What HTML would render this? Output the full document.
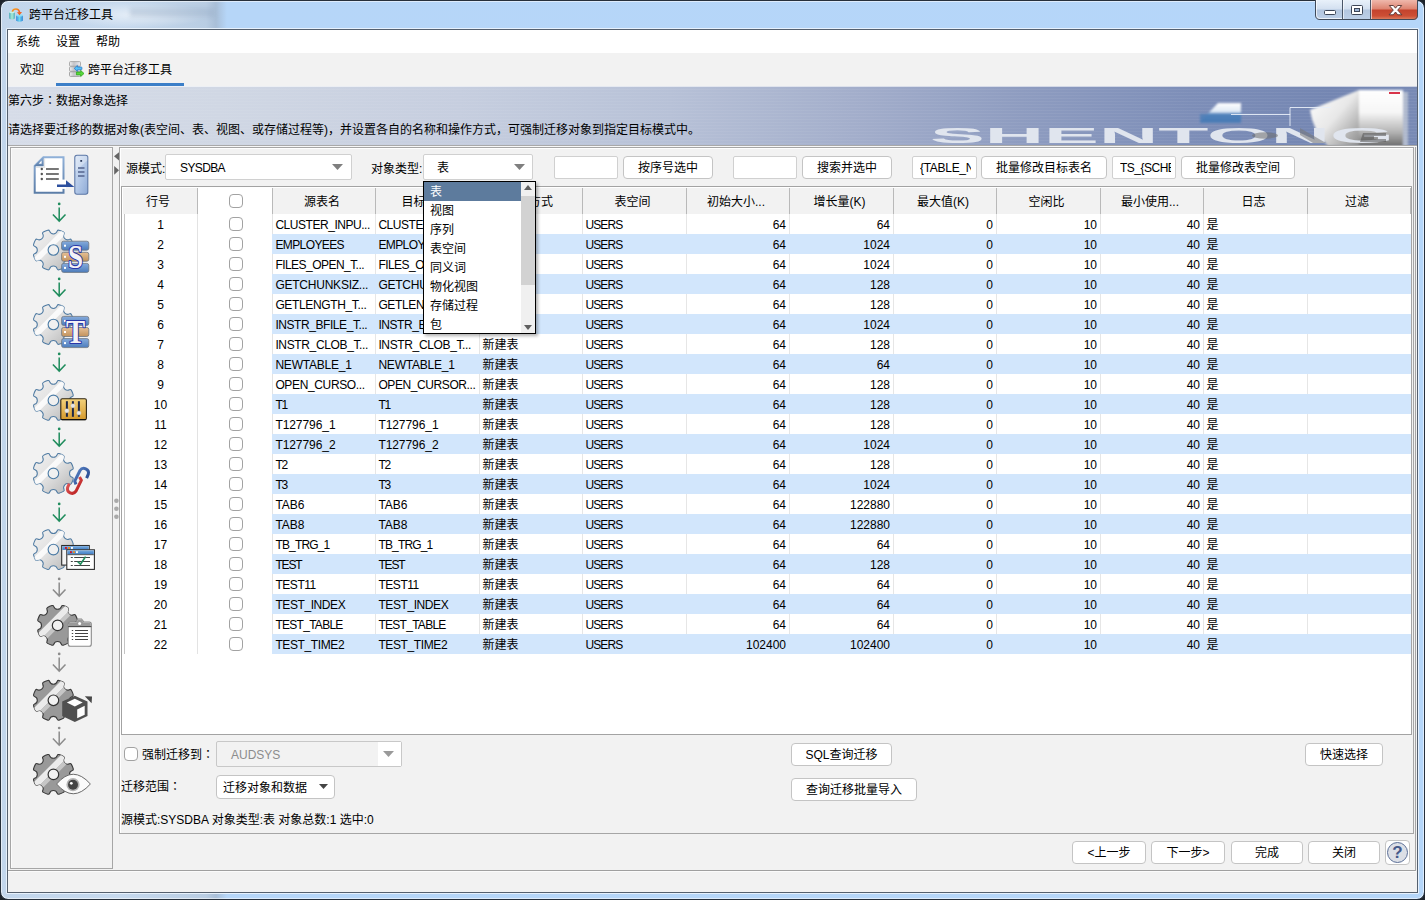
<!DOCTYPE html>
<html lang="zh-CN"><head><meta charset="utf-8"><title>跨平台迁移工具</title>
<style>
*{box-sizing:border-box;margin:0;padding:0}
html,body{width:1425px;height:900px;overflow:hidden}
body{position:relative;font-family:"Liberation Sans","Noto Sans CJK SC",sans-serif;font-size:12px;color:#000;background:#b9d3ee;line-height:16px}
.a{position:absolute}
.t{position:absolute;white-space:nowrap;height:16px;line-height:16px;margin-top:1px}
.l{letter-spacing:-0.45px}
.j{font-family:"Liberation Sans","Noto Sans CJK JP",sans-serif}
.btn{position:absolute;height:23px;border:1px solid #c4c4c4;border-radius:4px;background:#fff;text-align:center;line-height:21px;white-space:nowrap;padding-top:1px}
.inp{position:absolute;height:25px;border:1px solid #d0d0d0;background:#fff;border-radius:2px;line-height:23px;white-space:nowrap;overflow:hidden;padding-top:1px}
.cb{position:absolute;width:13.5px;height:13.5px;border:1px solid #a2a2a2;border-radius:4px;background:#fff}
.hd{position:absolute;top:188px;height:26px;line-height:26px;padding-top:1px;padding-right:4px;text-align:center;background:#f2f2f2;border-right:1px solid #b9b9b9;white-space:nowrap;overflow:hidden}
.row{position:absolute;left:124px;width:1287px;height:20px}
.row.b{background:linear-gradient(#d2e6fc,#d2e6fc) no-repeat 148px 0/1139px 20px}
.c{position:absolute;top:0;height:20px;line-height:20px;padding-top:1px;white-space:nowrap;overflow:hidden}
.r{text-align:right}
.g{position:absolute;top:0;width:1px;height:20px;background:#e6e6e6}
</style></head><body>
<div class="a" style="left:0;top:0;width:1425px;height:900px;background:#1d232b"></div>
<div class="a" id="glass" style="left:0;top:0;width:1425px;height:900px;border:1px solid #27303b;border-radius:8px;background:linear-gradient(90deg,#c2d6ec 0,#c6d9ee 120px,#b9cde3 205px,#a9bfd8 215px,#b6d6f8 226px,#b5d6f9 100%);box-shadow:inset 0 0 0 1px rgba(255,255,255,.55)"></div>
<div class="a" style="left:60px;top:2px;width:150px;height:26px;background:radial-gradient(ellipse at center,rgba(255,255,255,.55) 0,rgba(255,255,255,0) 70%)"></div>
<div class="a" style="left:130px;top:8px;width:85px;height:9px;background:rgba(150,170,195,.35);filter:blur(2px)"></div>
<div class="a" style="left:6px;top:28px;width:1413px;height:866px;border:1px solid rgba(235,244,253,.9);border-radius:1px"></div>
<div class="a" style="left:7px;top:29px;width:1411px;height:864px;border:1px solid #55606e;background:#f2f2f2"></div>
<svg class="a" style="left:1313px;top:0" width="107" height="22" viewBox="0 0 107 22">
<defs>
<linearGradient id="gb" x1="0" y1="0" x2="0" y2="1"><stop offset="0" stop-color="#e9f1fa"/><stop offset=".45" stop-color="#d3e0f0"/><stop offset=".5" stop-color="#b3c6df"/><stop offset="1" stop-color="#bdd0e8"/></linearGradient>
<linearGradient id="gr" x1="0" y1="0" x2="0" y2="1"><stop offset="0" stop-color="#efb8ac"/><stop offset=".45" stop-color="#dd8370"/><stop offset=".5" stop-color="#c4432d"/><stop offset=".8" stop-color="#cd4f35"/><stop offset="1" stop-color="#e08a6a"/></linearGradient>
<clipPath id="cp"><path d="M2 0H105V15Q105 20 100 20H7Q2 20 2 15Z"/></clipPath>
</defs>
<g clip-path="url(#cp)">
<rect x="2" y="0" width="28" height="20" fill="url(#gb)"/>
<rect x="30" y="0" width="27" height="20" fill="url(#gb)"/>
<rect x="57" y="0" width="48" height="20" fill="url(#gr)"/>
</g>
<path d="M2.5 0V15Q2.5 19.5 7 19.5H100Q104.5 19.5 104.5 15V0" fill="none" stroke="#3f4a5a" stroke-width="1"/>
<path d="M3.5 0V15Q3.5 18.5 7 18.5H29" fill="none" stroke="rgba(255,255,255,.7)" stroke-width="1"/>
<path d="M29.5 0V19M57.5 0V19" stroke="#4a5668" stroke-width="1"/>
<path d="M30.5 0V19M58.5 0V19" stroke="rgba(255,255,255,.6)" stroke-width="1"/>
<rect x="11.5" y="10.5" width="11" height="4" rx="1" fill="#fff" stroke="#3c4556" stroke-width="1"/>
<rect x="38.5" y="5.5" width="11" height="9" rx="1" fill="#fff" stroke="#3c4556" stroke-width="1"/>
<rect x="41.5" y="8.5" width="5" height="3" fill="#9db4d4" stroke="#3c4556" stroke-width="1"/>
<path d="M76.300 5.500h4.100l2.100 2.700 2.100-2.700h4.100l-4 4.600 4.200 4.700h-4.200l-2.200-2.800-2.200 2.800h-4.200l4.200-4.700z" fill="#fff" stroke="#53302e" stroke-width=".9" stroke-linejoin="round"/>
</svg>
<svg class="a" style="left:8px;top:7px" width="16" height="16" viewBox="0 0 16 16">
<defs>
<linearGradient id="c1" x1="0" y1="0" x2="1" y2="0"><stop offset="0" stop-color="#4fa9ba"/><stop offset=".5" stop-color="#a9ecd6"/><stop offset="1" stop-color="#55aebd"/></linearGradient>
<linearGradient id="c2" x1="0" y1="0" x2="1" y2="0"><stop offset="0" stop-color="#3a8fdc"/><stop offset=".5" stop-color="#6fd6f2"/><stop offset="1" stop-color="#2f83d6"/></linearGradient>
<linearGradient id="c3" x1="0" y1="0" x2="1" y2="1"><stop offset="0" stop-color="#f9a01e"/><stop offset="1" stop-color="#f15a24"/></linearGradient>
</defs>
<path d="M1.100 5.200Q4 3.800 6.900 5.200V11.600Q4 13.400 1.100 11.600Z" fill="url(#c1)"/>
<ellipse cx="4" cy="5.200" rx="2.900" ry="1" fill="#c6f3e6"/>
<path d="M8.100 8.400Q11.500 7 14.900 8.400V13.700Q11.500 15.600 8.100 13.700Z" fill="url(#c2)"/>
<ellipse cx="11.500" cy="8.400" rx="3.400" ry="1.100" fill="#8fdcf6"/>
<path d="M4.300 4.700C5 1.300 10.800 0.400 11.600 5.600" fill="none" stroke="url(#c3)" stroke-width="1.600"/>
<path d="M8.900 5.200L14 5L11.500 8.300Z" fill="#f2601f"/>
</svg>
<div class="t" style="left:29px;top:6px;font-size:12px">跨平台迁移工具</div>
<div class="a" style="left:8px;top:30px;width:1409px;height:23px;background:#fff"></div>
<div class="t" style="left:16px;top:33px">系统</div>
<div class="t" style="left:56px;top:33px">设置</div>
<div class="t" style="left:96px;top:33px">帮助</div>
<div class="a" style="left:8px;top:53px;width:1409px;height:33px;background:#f2f2f2"></div>
<div class="t" style="left:20px;top:61px">欢迎</div>
<div class="t" style="left:88px;top:61px">跨平台迁移工具</div>
<div class="a" style="left:56px;top:83px;width:128px;height:3px;background:#3c7fc8"></div>
<svg class="a" style="left:68px;top:61px" width="17" height="17" viewBox="0 0 17 17">
<defs><linearGradient id="rk" x1="0" y1="0" x2="1" y2="0"><stop offset="0" stop-color="#f0f0f0"/><stop offset=".4" stop-color="#c4c4c8"/><stop offset="1" stop-color="#ececf2"/></linearGradient></defs>
<rect x="1.500" y=".600" width="11" height="4.600" rx="1" fill="url(#rk)" stroke="#a4a4a4" stroke-width=".9"/>
<rect x="1.500" y="5.700" width="11" height="4.600" rx="1" fill="url(#rk)" stroke="#a4a4a4" stroke-width=".9"/>
<rect x="1.500" y="10.800" width="11" height="4.600" rx="1" fill="url(#rk)" stroke="#9c9c9c" stroke-width=".9"/>
<path d="M6.200 7.400L9.400 4.400V6H13.200Q13.900 6 13.900 6.700V8.100Q13.900 8.800 13.200 8.800H9.400V10.400Z" fill="#55c0f6" stroke="#2b78c8" stroke-width=".8" stroke-linejoin="round"/>
<path d="M16 12.500L12.700 9.500V11.100H8.400V13.900H12.700V15.500Z" fill="#58d83a" stroke="#2fa51e" stroke-width=".8" stroke-linejoin="round"/>
</svg>
<div class="a" id="banner" style="left:8px;top:86px;width:1409px;height:60px;background:linear-gradient(90deg,#d6dce8 0,#d0d7e4 15%,#c6cedf 32%,#b7c1d7 47%,#a3aecb 60%,#8e9cc0 72%,#7d8eb8 84%,#7486b2 94%,#788ab5 100%);overflow:hidden">
<div class="a" style="left:0;top:0;width:1409px;height:60px;background:repeating-linear-gradient(180deg,rgba(255,255,255,.05) 0,rgba(255,255,255,.05) 1px,rgba(0,0,0,0) 1px,rgba(0,0,0,0) 3px)"></div>
<div class="a" style="left:0;top:0;width:1409px;height:1px;background:rgba(255,255,255,.6)"></div>
<svg class="a" style="left:900px;top:0" width="509" height="60" viewBox="0 0 509 60">
<defs>
<linearGradient id="sv1" x1="0" y1="0" x2="0" y2="1"><stop offset="0" stop-color="#fff"/><stop offset=".4" stop-color="#f6f6f6"/><stop offset=".75" stop-color="#b4b4b4"/><stop offset="1" stop-color="#6e6e6e"/></linearGradient>
<linearGradient id="sv2" x1="0" y1="0" x2="1" y2="1"><stop offset="0" stop-color="#fff"/><stop offset=".5" stop-color="#e8e8e8"/><stop offset="1" stop-color="#8c8c8c"/></linearGradient>
<linearGradient id="sv3" x1="0" y1="0" x2="0" y2="1"><stop offset="0" stop-color="#fff"/><stop offset=".45" stop-color="#dfeaf5"/><stop offset=".55" stop-color="#6f9ccc"/><stop offset="1" stop-color="#3e6ea8"/></linearGradient>
<filter id="bl1"><feGaussianBlur stdDeviation="1.2"/></filter>
<filter id="bl2"><feGaussianBlur stdDeviation="0.7"/></filter>
</defs>
<g filter="url(#bl1)">
<path d="M402 24L451 4V60H420Q405 45 402 24Z" fill="url(#sv2)"/>
<rect x="451" y="4" width="44" height="56" fill="url(#sv1)"/>
<rect x="495" y="6" width="5" height="54" fill="#c9ced8" opacity=".7"/>
<path d="M292 36L310 17H333V36Z" fill="url(#sv3)"/>
<rect x="292" y="28" width="41" height="9" fill="#4a7db8" opacity=".8"/>
</g>
<path d="M323 28.500H382V21.500H423M382 28V40" fill="none" stroke="#e8eef8" stroke-width="1" opacity=".9"/>
<rect x="481" y="6" width="11" height="2" fill="#d8354a"/>
<g filter="url(#bl2)">
<text x="22" y="57" font-family="'Liberation Sans',sans-serif" font-weight="bold" font-size="22.500" fill="#e0e5ee" textLength="464" lengthAdjust="spacingAndGlyphs">SHENTONG</text>
</g>
<g filter="url(#bl2)" opacity=".55">
<ellipse cx="357" cy="49.500" rx="13" ry="3.200" fill="#6e6e6e"/>
<path d="M455 47H478V50H466V53H478V56H452Z" fill="#555"/>
<path d="M392 42L418 57H405L392 49Z" fill="#777"/>
</g>
</svg>
</div>
<div class="t" style="left:8px;top:92px">第六步<span class="j" lang="ja">：</span>数据对象选择</div>
<div class="t" style="left:8px;top:121px">请选择要迁移的数据对象(表空间、表、视图、或存储过程等)，并设置各自的名称和操作方式，可强制迁移对象到指定目标模式中。</div>
<div class="a" style="left:8px;top:145px;width:1409px;height:1px;background:#a9a9a9"></div>
<div class="a" style="left:8px;top:146px;width:1409px;height:1px;background:#f7f7f7"></div>
<div class="a" style="left:10px;top:147px;width:103px;height:722px;border:1px solid #a6a6a6;background:#f2f2f2;box-shadow:inset 1px 1px 0 #fbfbfb"></div>
<div class="a" style="left:119px;top:147px;width:1295px;height:687px;border:1px solid #a6a6a6;background:#f2f2f2;box-shadow:inset 1px 1px 0 #fff"></div>
<div class="a" style="left:8px;top:870px;width:1408px;height:1px;background:#a0a0a0"></div>
<div class="a" style="left:8px;top:871px;width:1408px;height:1px;background:#fbfbfb"></div>
<div class="a" style="left:1415px;top:147px;width:1px;height:724px;background:#a6a6a6"></div>
<svg class="a" style="left:113px;top:150px" width="7" height="372" viewBox="113 150 7 372">
<path d="M114 156.300L119 152.200V160.400Z" fill="#666"/><path d="M114.200 165.900L119 170.300L114.200 174.800Z" fill="#666"/>
<circle cx="116.400" cy="500.800" r="2.300" fill="#aaa"/><circle cx="116.400" cy="508.800" r="2.300" fill="#aaa"/><circle cx="116.400" cy="516.700" r="2.300" fill="#aaa"/>
</svg>
<svg class="a" style="left:11px;top:148px" width="101" height="720" viewBox="11 148 101 720">
<defs><linearGradient id="gg" x1="0" y1="0" x2="1" y2="1"><stop offset="0" stop-color="#f1f1f1"/><stop offset=".5" stop-color="#dfdfdf"/><stop offset="1" stop-color="#b4b4b4"/></linearGradient><clipPath id="gc"><path d="M19.82 -5.63A1.50 1.50 0 0 1 18.84 -3.80A4.00 4.00 0 0 0 18.84 3.80A1.50 1.50 0 0 1 19.82 5.63A20.60 20.60 0 0 1 17.99 10.03A1.50 1.50 0 0 1 16.01 10.64A4.00 4.00 0 0 0 10.64 16.01A1.50 1.50 0 0 1 10.03 17.99A20.60 20.60 0 0 1 5.63 19.82A1.50 1.50 0 0 1 3.80 18.84A4.00 4.00 0 0 0 -3.80 18.84A1.50 1.50 0 0 1 -5.63 19.82A20.60 20.60 0 0 1 -10.03 17.99A1.50 1.50 0 0 1 -10.64 16.01A4.00 4.00 0 0 0 -16.01 10.64A1.50 1.50 0 0 1 -17.99 10.03A20.60 20.60 0 0 1 -19.82 5.63A1.50 1.50 0 0 1 -18.84 3.80A4.00 4.00 0 0 0 -18.84 -3.80A1.50 1.50 0 0 1 -19.82 -5.63A20.60 20.60 0 0 1 -17.99 -10.03A1.50 1.50 0 0 1 -16.01 -10.64A4.00 4.00 0 0 0 -10.64 -16.01A1.50 1.50 0 0 1 -10.03 -17.99A20.60 20.60 0 0 1 -5.63 -19.82A1.50 1.50 0 0 1 -3.80 -18.84A4.00 4.00 0 0 0 3.80 -18.84A1.50 1.50 0 0 1 5.63 -19.82A20.60 20.60 0 0 1 10.03 -17.99A1.50 1.50 0 0 1 10.64 -16.01A4.00 4.00 0 0 0 16.01 -10.64A1.50 1.50 0 0 1 17.99 -10.03A20.60 20.60 0 0 1 19.82 -5.63Z"/></clipPath><linearGradient id="rb" x1="0" y1="0" x2="0" y2="1"><stop offset="0" stop-color="#86abdc"/><stop offset="1" stop-color="#4c7cbc"/></linearGradient><linearGradient id="rt" x1="0" y1="0" x2="0" y2="1"><stop offset="0" stop-color="#e6c096"/><stop offset="1" stop-color="#c2925c"/></linearGradient><linearGradient id="gold" x1="0" y1="0" x2="0" y2="1"><stop offset="0" stop-color="#f3d27c"/><stop offset="1" stop-color="#d69a2c"/></linearGradient><linearGradient id="tw" x1="0" y1="0" x2="1" y2="1"><stop offset="0" stop-color="#d4e1f3"/><stop offset=".5" stop-color="#b4c9e8"/><stop offset="1" stop-color="#8fabd6"/></linearGradient><linearGradient id="wt" x1="0" y1="0" x2="0" y2="1"><stop offset="0" stop-color="#78abdf"/><stop offset="1" stop-color="#3f7cc2"/></linearGradient><linearGradient id="lb" x1="0" y1="0" x2="1" y2="1"><stop offset="0" stop-color="#5b86c8"/><stop offset="1" stop-color="#1f3f86"/></linearGradient><linearGradient id="lr" x1="0" y1="0" x2="1" y2="1"><stop offset="0" stop-color="#e86a6a"/><stop offset="1" stop-color="#b41414"/></linearGradient><linearGradient id="dg" x1="0" y1="0" x2="0" y2="1"><stop offset="0" stop-color="#8fb0d8"/><stop offset="1" stop-color="#5c7ea8"/></linearGradient></defs>
<path d="M43.400 157.200H63.500V192.800H34.700V166Z" fill="#fff" stroke="url(#dg)" stroke-width="2" stroke-linejoin="miter"/><path d="M34.200 166.300H43.700V156.500Z" fill="url(#dg)"/><path d="M38.600 163.800H41.600V160.600Z" fill="#fff"/><path d="M36 167.500H44.500V158.500" stroke="#9a9a9a" stroke-width="1.200" fill="none" opacity=".25"/><circle cx="41.800" cy="169" r="1.200" fill="#555"/><path d="M46 169H58.800" stroke="#4a4a4a" stroke-width="1.500"/><circle cx="41.800" cy="174" r="1.200" fill="#555"/><path d="M46 174H58.800" stroke="#4a4a4a" stroke-width="1.500"/><circle cx="41.800" cy="179" r="1.200" fill="#555"/><path d="M46 179H58.800" stroke="#4a4a4a" stroke-width="1.500"/><rect x="60" y="179.600" width="6" height="9.300" fill="#fff"/><path d="M57 184.600H66V180.300L74.400 186.900H57Z" fill="#2c4f9e"/><rect x="74.800" y="155.300" width="13" height="39" rx="2.200" fill="url(#tw)" stroke="#5d78a6" stroke-width="1.100"/><path d="M75.500 171L87.300 160.500V156H76.500L75.500 157Z" fill="#fff" opacity=".3"/><rect x="80.300" y="160" width="1.800" height="1.800" fill="#2d3c5c"/><path d="M78 168H84.500" stroke="#5f7098" stroke-width="1.700"/><path d="M78 172H84.500" stroke="#5f7098" stroke-width="1.700"/><path d="M78 176H84.500" stroke="#5f7098" stroke-width="1.700"/>
<circle cx="59.2" cy="203.9" r="1.350" fill="#1f8c5c"/><path d="M59.2 207.5V220.9M52.900000000000006 214.5L59.2 221.1L65.5 214.5" fill="none" stroke="#1f8c5c" stroke-width="1.500" stroke-linecap="butt" stroke-linejoin="miter"/>
<circle cx="59.2" cy="278.9" r="1.350" fill="#1f8c5c"/><path d="M59.2 282.5V295.9M52.900000000000006 289.5L59.2 296.09999999999997L65.5 289.5" fill="none" stroke="#1f8c5c" stroke-width="1.500" stroke-linecap="butt" stroke-linejoin="miter"/>
<circle cx="59.2" cy="353.9" r="1.350" fill="#1f8c5c"/><path d="M59.2 357.5V370.9M52.900000000000006 364.5L59.2 371.09999999999997L65.5 364.5" fill="none" stroke="#1f8c5c" stroke-width="1.500" stroke-linecap="butt" stroke-linejoin="miter"/>
<circle cx="59.2" cy="428.9" r="1.350" fill="#1f8c5c"/><path d="M59.2 432.5V445.9M52.900000000000006 439.5L59.2 446.09999999999997L65.5 439.5" fill="none" stroke="#1f8c5c" stroke-width="1.500" stroke-linecap="butt" stroke-linejoin="miter"/>
<circle cx="59.2" cy="503.9" r="1.350" fill="#1f8c5c"/><path d="M59.2 507.5V520.9M52.900000000000006 514.5L59.2 521.1L65.5 514.5" fill="none" stroke="#1f8c5c" stroke-width="1.500" stroke-linecap="butt" stroke-linejoin="miter"/>
<circle cx="59.2" cy="578.9" r="1.350" fill="#8c8c8c"/><path d="M59.2 582.5V595.9M52.900000000000006 589.5L59.2 596.1L65.5 589.5" fill="none" stroke="#8c8c8c" stroke-width="1.500" stroke-linecap="butt" stroke-linejoin="miter"/>
<circle cx="59.2" cy="653.9" r="1.350" fill="#8c8c8c"/><path d="M59.2 657.5V670.9M52.900000000000006 664.5L59.2 671.1L65.5 664.5" fill="none" stroke="#8c8c8c" stroke-width="1.500" stroke-linecap="butt" stroke-linejoin="miter"/>
<circle cx="59.2" cy="728.0" r="1.350" fill="#8c8c8c"/><path d="M59.2 731.6V745.0M52.900000000000006 738.6L59.2 745.2L65.5 738.6" fill="none" stroke="#8c8c8c" stroke-width="1.500" stroke-linecap="butt" stroke-linejoin="miter"/>
<g transform="translate(53.4,250)"><path d="M19.82 -5.63A1.50 1.50 0 0 1 18.84 -3.80A4.00 4.00 0 0 0 18.84 3.80A1.50 1.50 0 0 1 19.82 5.63A20.60 20.60 0 0 1 17.99 10.03A1.50 1.50 0 0 1 16.01 10.64A4.00 4.00 0 0 0 10.64 16.01A1.50 1.50 0 0 1 10.03 17.99A20.60 20.60 0 0 1 5.63 19.82A1.50 1.50 0 0 1 3.80 18.84A4.00 4.00 0 0 0 -3.80 18.84A1.50 1.50 0 0 1 -5.63 19.82A20.60 20.60 0 0 1 -10.03 17.99A1.50 1.50 0 0 1 -10.64 16.01A4.00 4.00 0 0 0 -16.01 10.64A1.50 1.50 0 0 1 -17.99 10.03A20.60 20.60 0 0 1 -19.82 5.63A1.50 1.50 0 0 1 -18.84 3.80A4.00 4.00 0 0 0 -18.84 -3.80A1.50 1.50 0 0 1 -19.82 -5.63A20.60 20.60 0 0 1 -17.99 -10.03A1.50 1.50 0 0 1 -16.01 -10.64A4.00 4.00 0 0 0 -10.64 -16.01A1.50 1.50 0 0 1 -10.03 -17.99A20.60 20.60 0 0 1 -5.63 -19.82A1.50 1.50 0 0 1 -3.80 -18.84A4.00 4.00 0 0 0 3.80 -18.84A1.50 1.50 0 0 1 5.63 -19.82A20.60 20.60 0 0 1 10.03 -17.99A1.50 1.50 0 0 1 10.64 -16.01A4.00 4.00 0 0 0 16.01 -10.64A1.50 1.50 0 0 1 17.99 -10.03A20.60 20.60 0 0 1 19.82 -5.63Z" fill="url(#gg)" stroke="#517ca3" stroke-width="1.05" stroke-linejoin="round"/><g clip-path="url(#gc)"><path d="M-30 18.5L18.5 -30L22.500 -26L-26 22.500Z" fill="#fff" opacity=".8"/></g><circle r="5.300" fill="#f0f0f0" stroke="#4a7aa4" stroke-width="1.1"/></g>
<rect x="61.600" y="241.2" width="27.200" height="9" rx="2" fill="url(#rb)" stroke="#6e7680" stroke-width=".8"/><rect x="64" y="244.7" width="2" height="2" fill="#fff"/><rect x="61.600" y="252.3" width="27.200" height="9" rx="2" fill="url(#rt)" stroke="#6e7680" stroke-width=".8"/><rect x="64" y="255.8" width="2" height="2" fill="#fff"/><rect x="61.600" y="263.4" width="27.200" height="9" rx="2" fill="url(#rb)" stroke="#6e7680" stroke-width=".8"/><rect x="64" y="266.9" width="2" height="2" fill="#fff"/><text transform="translate(75.600,267.8) scale(0.82,1)" x="0" y="0" text-anchor="middle" font-family="'Liberation Serif',serif" font-weight="bold" font-size="33" fill="#f4f2f6" stroke="#2a36a8" stroke-width="2.200" stroke-linejoin="round" paint-order="stroke">S</text>
<g transform="translate(53.4,324.5)"><path d="M19.82 -5.63A1.50 1.50 0 0 1 18.84 -3.80A4.00 4.00 0 0 0 18.84 3.80A1.50 1.50 0 0 1 19.82 5.63A20.60 20.60 0 0 1 17.99 10.03A1.50 1.50 0 0 1 16.01 10.64A4.00 4.00 0 0 0 10.64 16.01A1.50 1.50 0 0 1 10.03 17.99A20.60 20.60 0 0 1 5.63 19.82A1.50 1.50 0 0 1 3.80 18.84A4.00 4.00 0 0 0 -3.80 18.84A1.50 1.50 0 0 1 -5.63 19.82A20.60 20.60 0 0 1 -10.03 17.99A1.50 1.50 0 0 1 -10.64 16.01A4.00 4.00 0 0 0 -16.01 10.64A1.50 1.50 0 0 1 -17.99 10.03A20.60 20.60 0 0 1 -19.82 5.63A1.50 1.50 0 0 1 -18.84 3.80A4.00 4.00 0 0 0 -18.84 -3.80A1.50 1.50 0 0 1 -19.82 -5.63A20.60 20.60 0 0 1 -17.99 -10.03A1.50 1.50 0 0 1 -16.01 -10.64A4.00 4.00 0 0 0 -10.64 -16.01A1.50 1.50 0 0 1 -10.03 -17.99A20.60 20.60 0 0 1 -5.63 -19.82A1.50 1.50 0 0 1 -3.80 -18.84A4.00 4.00 0 0 0 3.80 -18.84A1.50 1.50 0 0 1 5.63 -19.82A20.60 20.60 0 0 1 10.03 -17.99A1.50 1.50 0 0 1 10.64 -16.01A4.00 4.00 0 0 0 16.01 -10.64A1.50 1.50 0 0 1 17.99 -10.03A20.60 20.60 0 0 1 19.82 -5.63Z" fill="url(#gg)" stroke="#517ca3" stroke-width="1.05" stroke-linejoin="round"/><g clip-path="url(#gc)"><path d="M-30 18.5L18.5 -30L22.500 -26L-26 22.500Z" fill="#fff" opacity=".8"/></g><circle r="5.300" fill="#f0f0f0" stroke="#4a7aa4" stroke-width="1.1"/></g>
<rect x="61.600" y="316.4" width="27.200" height="9" rx="2" fill="url(#rb)" stroke="#6e7680" stroke-width=".8"/><rect x="64" y="319.9" width="2" height="2" fill="#fff"/><rect x="61.600" y="327.5" width="27.200" height="9" rx="2" fill="url(#rt)" stroke="#6e7680" stroke-width=".8"/><rect x="64" y="331.0" width="2" height="2" fill="#fff"/><rect x="61.600" y="338.6" width="27.200" height="9" rx="2" fill="url(#rb)" stroke="#6e7680" stroke-width=".8"/><rect x="64" y="342.1" width="2" height="2" fill="#fff"/><text transform="translate(75.600,343.0) scale(0.87,1)" x="0" y="0" text-anchor="middle" font-family="'Liberation Serif',serif" font-weight="bold" font-size="33" fill="#f4f2f6" stroke="#2a36a8" stroke-width="2.200" stroke-linejoin="round" paint-order="stroke">T</text>
<g transform="translate(53.4,400.4)"><path d="M19.82 -5.63A1.50 1.50 0 0 1 18.84 -3.80A4.00 4.00 0 0 0 18.84 3.80A1.50 1.50 0 0 1 19.82 5.63A20.60 20.60 0 0 1 17.99 10.03A1.50 1.50 0 0 1 16.01 10.64A4.00 4.00 0 0 0 10.64 16.01A1.50 1.50 0 0 1 10.03 17.99A20.60 20.60 0 0 1 5.63 19.82A1.50 1.50 0 0 1 3.80 18.84A4.00 4.00 0 0 0 -3.80 18.84A1.50 1.50 0 0 1 -5.63 19.82A20.60 20.60 0 0 1 -10.03 17.99A1.50 1.50 0 0 1 -10.64 16.01A4.00 4.00 0 0 0 -16.01 10.64A1.50 1.50 0 0 1 -17.99 10.03A20.60 20.60 0 0 1 -19.82 5.63A1.50 1.50 0 0 1 -18.84 3.80A4.00 4.00 0 0 0 -18.84 -3.80A1.50 1.50 0 0 1 -19.82 -5.63A20.60 20.60 0 0 1 -17.99 -10.03A1.50 1.50 0 0 1 -16.01 -10.64A4.00 4.00 0 0 0 -10.64 -16.01A1.50 1.50 0 0 1 -10.03 -17.99A20.60 20.60 0 0 1 -5.63 -19.82A1.50 1.50 0 0 1 -3.80 -18.84A4.00 4.00 0 0 0 3.80 -18.84A1.50 1.50 0 0 1 5.63 -19.82A20.60 20.60 0 0 1 10.03 -17.99A1.50 1.50 0 0 1 10.64 -16.01A4.00 4.00 0 0 0 16.01 -10.64A1.50 1.50 0 0 1 17.99 -10.03A20.60 20.60 0 0 1 19.82 -5.63Z" fill="url(#gg)" stroke="#517ca3" stroke-width="1.05" stroke-linejoin="round"/><g clip-path="url(#gc)"><path d="M-30 18.5L18.5 -30L22.500 -26L-26 22.500Z" fill="#fff" opacity=".8"/></g><circle r="5.300" fill="#f0f0f0" stroke="#4a7aa4" stroke-width="1.1"/></g>
<rect x="60.800" y="398.700" width="25.600" height="21" rx="1.500" fill="url(#gold)" stroke="#2e2412" stroke-width="1.100"/><path d="M61.500 419.600H86" stroke="#111" stroke-width="1.200"/><path d="M66.9 401.200V416.800" stroke="#1c2748" stroke-width="2"/><circle cx="66.9" cy="410.8" r="2.100" fill="#e6e6e6" stroke="#c9c9c9" stroke-width=".4"/><path d="M72.9 401.200V416.800" stroke="#1c2748" stroke-width="2"/><circle cx="72.9" cy="405.8" r="2.100" fill="#e6e6e6" stroke="#c9c9c9" stroke-width=".4"/><path d="M78.9 401.200V416.800" stroke="#1c2748" stroke-width="2"/><circle cx="78.9" cy="413" r="2.100" fill="#e6e6e6" stroke="#c9c9c9" stroke-width=".4"/>
<g transform="translate(53.4,473.4)"><path d="M19.82 -5.63A1.50 1.50 0 0 1 18.84 -3.80A4.00 4.00 0 0 0 18.84 3.80A1.50 1.50 0 0 1 19.82 5.63A20.60 20.60 0 0 1 17.99 10.03A1.50 1.50 0 0 1 16.01 10.64A4.00 4.00 0 0 0 10.64 16.01A1.50 1.50 0 0 1 10.03 17.99A20.60 20.60 0 0 1 5.63 19.82A1.50 1.50 0 0 1 3.80 18.84A4.00 4.00 0 0 0 -3.80 18.84A1.50 1.50 0 0 1 -5.63 19.82A20.60 20.60 0 0 1 -10.03 17.99A1.50 1.50 0 0 1 -10.64 16.01A4.00 4.00 0 0 0 -16.01 10.64A1.50 1.50 0 0 1 -17.99 10.03A20.60 20.60 0 0 1 -19.82 5.63A1.50 1.50 0 0 1 -18.84 3.80A4.00 4.00 0 0 0 -18.84 -3.80A1.50 1.50 0 0 1 -19.82 -5.63A20.60 20.60 0 0 1 -17.99 -10.03A1.50 1.50 0 0 1 -16.01 -10.64A4.00 4.00 0 0 0 -10.64 -16.01A1.50 1.50 0 0 1 -10.03 -17.99A20.60 20.60 0 0 1 -5.63 -19.82A1.50 1.50 0 0 1 -3.80 -18.84A4.00 4.00 0 0 0 3.80 -18.84A1.50 1.50 0 0 1 5.63 -19.82A20.60 20.60 0 0 1 10.03 -17.99A1.50 1.50 0 0 1 10.64 -16.01A4.00 4.00 0 0 0 16.01 -10.64A1.50 1.50 0 0 1 17.99 -10.03A20.60 20.60 0 0 1 19.82 -5.63Z" fill="url(#gg)" stroke="#517ca3" stroke-width="1.05" stroke-linejoin="round"/><g clip-path="url(#gc)"><path d="M-30 18.5L18.5 -30L22.500 -26L-26 22.500Z" fill="#fff" opacity=".8"/></g><circle r="5.300" fill="#f0f0f0" stroke="#4a7aa4" stroke-width="1.1"/></g>
<path d="M76 484.300L74.700 481.200L80 470.500A4.600 4.600 0 0 1 88.300 474.200L86.600 478.200" fill="none" stroke="url(#lb)" stroke-width="3" stroke-linejoin="round"/><path d="M79.500 477L81.400 480.200L76 491.200A4.700 4.700 0 0 1 67.600 487.300L69.300 483.600" fill="none" stroke="url(#lr)" stroke-width="3" stroke-linejoin="round"/>
<g transform="translate(53.4,549.6)"><path d="M19.82 -5.63A1.50 1.50 0 0 1 18.84 -3.80A4.00 4.00 0 0 0 18.84 3.80A1.50 1.50 0 0 1 19.82 5.63A20.60 20.60 0 0 1 17.99 10.03A1.50 1.50 0 0 1 16.01 10.64A4.00 4.00 0 0 0 10.64 16.01A1.50 1.50 0 0 1 10.03 17.99A20.60 20.60 0 0 1 5.63 19.82A1.50 1.50 0 0 1 3.80 18.84A4.00 4.00 0 0 0 -3.80 18.84A1.50 1.50 0 0 1 -5.63 19.82A20.60 20.60 0 0 1 -10.03 17.99A1.50 1.50 0 0 1 -10.64 16.01A4.00 4.00 0 0 0 -16.01 10.64A1.50 1.50 0 0 1 -17.99 10.03A20.60 20.60 0 0 1 -19.82 5.63A1.50 1.50 0 0 1 -18.84 3.80A4.00 4.00 0 0 0 -18.84 -3.80A1.50 1.50 0 0 1 -19.82 -5.63A20.60 20.60 0 0 1 -17.99 -10.03A1.50 1.50 0 0 1 -16.01 -10.64A4.00 4.00 0 0 0 -10.64 -16.01A1.50 1.50 0 0 1 -10.03 -17.99A20.60 20.60 0 0 1 -5.63 -19.82A1.50 1.50 0 0 1 -3.80 -18.84A4.00 4.00 0 0 0 3.80 -18.84A1.50 1.50 0 0 1 5.63 -19.82A20.60 20.60 0 0 1 10.03 -17.99A1.50 1.50 0 0 1 10.64 -16.01A4.00 4.00 0 0 0 16.01 -10.64A1.50 1.50 0 0 1 17.99 -10.03A20.60 20.60 0 0 1 19.82 -5.63Z" fill="url(#gg)" stroke="#517ca3" stroke-width="1.05" stroke-linejoin="round"/><g clip-path="url(#gc)"><path d="M-30 18.5L18.5 -30L22.500 -26L-26 22.500Z" fill="#fff" opacity=".8"/></g><circle r="5.300" fill="#f0f0f0" stroke="#4a7aa4" stroke-width="1.1"/></g>
<rect x="61.700" y="545.500" width="27.600" height="19.600" fill="#f4f4f4" stroke="#2e2e2e" stroke-width="1.100"/><rect x="62.300" y="546.100" width="26.400" height="3.800" fill="url(#wt)"/><rect x="65" y="547" width="1.900" height="1.900" fill="#d0112b"/><rect x="68" y="547" width="1.900" height="1.900" fill="#f08a1c"/><rect x="71" y="547" width="1.900" height="1.900" fill="#fff"/><rect x="66.800" y="549.800" width="27.600" height="19.600" fill="#fff" stroke="#2e2e2e" stroke-width="1.100"/><rect x="67.400" y="550.400" width="26.400" height="4" fill="url(#wt)"/><path d="M67.400 554.700H93.800" stroke="#2e2e2e" stroke-width=".8"/><rect x="70" y="551.200" width="1.900" height="1.900" fill="#d0112b"/><rect x="73" y="551.200" width="1.900" height="1.900" fill="#f08a1c"/><rect x="76" y="551.200" width="1.900" height="1.900" fill="#fff"/><path d="M70.800 557.5H72.800M74.200 557.5H90" stroke="#444" stroke-width="1"/><path d="M70.800 561.5H72.800M74.200 561.5H90" stroke="#444" stroke-width="1"/><path d="M70.800 565.5H72.800M74.200 565.5H90" stroke="#444" stroke-width="1"/><path d="M77.600 561.500L80.500 564.300L85.600 556.600" fill="none" stroke="#1f8c5c" stroke-width="1.700"/>
<g transform="translate(57.6,625.4)"><path d="M19.82 -5.63A1.50 1.50 0 0 1 18.84 -3.80A4.00 4.00 0 0 0 18.84 3.80A1.50 1.50 0 0 1 19.82 5.63A20.60 20.60 0 0 1 17.99 10.03A1.50 1.50 0 0 1 16.01 10.64A4.00 4.00 0 0 0 10.64 16.01A1.50 1.50 0 0 1 10.03 17.99A20.60 20.60 0 0 1 5.63 19.82A1.50 1.50 0 0 1 3.80 18.84A4.00 4.00 0 0 0 -3.80 18.84A1.50 1.50 0 0 1 -5.63 19.82A20.60 20.60 0 0 1 -10.03 17.99A1.50 1.50 0 0 1 -10.64 16.01A4.00 4.00 0 0 0 -16.01 10.64A1.50 1.50 0 0 1 -17.99 10.03A20.60 20.60 0 0 1 -19.82 5.63A1.50 1.50 0 0 1 -18.84 3.80A4.00 4.00 0 0 0 -18.84 -3.80A1.50 1.50 0 0 1 -19.82 -5.63A20.60 20.60 0 0 1 -17.99 -10.03A1.50 1.50 0 0 1 -16.01 -10.64A4.00 4.00 0 0 0 -10.64 -16.01A1.50 1.50 0 0 1 -10.03 -17.99A20.60 20.60 0 0 1 -5.63 -19.82A1.50 1.50 0 0 1 -3.80 -18.84A4.00 4.00 0 0 0 3.80 -18.84A1.50 1.50 0 0 1 5.63 -19.82A20.60 20.60 0 0 1 10.03 -17.99A1.50 1.50 0 0 1 10.64 -16.01A4.00 4.00 0 0 0 16.01 -10.64A1.50 1.50 0 0 1 17.99 -10.03A20.60 20.60 0 0 1 19.82 -5.63Z" fill="#999" stroke="#3a3a3a" stroke-width="1.1" stroke-linejoin="round"/><g clip-path="url(#gc)"><path d="M-30 18.2L18.2 -30L22.700 -25.500L-25.500 22.700Z" fill="#ebebeb"/><path d="M-25.500 22.700L22.700 -25.500L25.500 -22.700L-22.700 25.500Z" fill="#c6c6c6"/></g><circle r="5.300" fill="#f2f2f2" stroke="#333" stroke-width="1.2"/></g>
<path d="M70.300 622H76L78 619H81.500L84 622H89.200Q91.300 622 91.300 624.200V644Q91.300 646.300 89.200 646.300H70.300Q68.200 646.300 68.200 644V624.200Q68.200 622 70.300 622Z" fill="#fff" stroke="#8a8a8a" stroke-width="1.100"/><path d="M68.700 626.300V624.200Q68.700 622.500 70.300 622.500H76.300L78.200 619.500H81.300L83.700 622.500H89.200Q90.800 622.500 90.800 624.200V626.300Z" fill="#9a9a9a"/><path d="M68.200 626.600H91.300" stroke="#444" stroke-width="1.100"/><circle cx="79.600" cy="623.400" r="1.500" fill="#fff"/><path d="M71.800 630.5H73.200M75 630.5H88" stroke="#444" stroke-width="1"/><path d="M71.800 633.5H73.200M75 633.5H88" stroke="#444" stroke-width="1"/><path d="M71.800 636.5H73.200M75 636.5H88" stroke="#444" stroke-width="1"/><path d="M71.800 639.5H73.200M75 639.5H88" stroke="#444" stroke-width="1"/>
<g transform="translate(53.4,700.3)"><path d="M19.82 -5.63A1.50 1.50 0 0 1 18.84 -3.80A4.00 4.00 0 0 0 18.84 3.80A1.50 1.50 0 0 1 19.82 5.63A20.60 20.60 0 0 1 17.99 10.03A1.50 1.50 0 0 1 16.01 10.64A4.00 4.00 0 0 0 10.64 16.01A1.50 1.50 0 0 1 10.03 17.99A20.60 20.60 0 0 1 5.63 19.82A1.50 1.50 0 0 1 3.80 18.84A4.00 4.00 0 0 0 -3.80 18.84A1.50 1.50 0 0 1 -5.63 19.82A20.60 20.60 0 0 1 -10.03 17.99A1.50 1.50 0 0 1 -10.64 16.01A4.00 4.00 0 0 0 -16.01 10.64A1.50 1.50 0 0 1 -17.99 10.03A20.60 20.60 0 0 1 -19.82 5.63A1.50 1.50 0 0 1 -18.84 3.80A4.00 4.00 0 0 0 -18.84 -3.80A1.50 1.50 0 0 1 -19.82 -5.63A20.60 20.60 0 0 1 -17.99 -10.03A1.50 1.50 0 0 1 -16.01 -10.64A4.00 4.00 0 0 0 -10.64 -16.01A1.50 1.50 0 0 1 -10.03 -17.99A20.60 20.60 0 0 1 -5.63 -19.82A1.50 1.50 0 0 1 -3.80 -18.84A4.00 4.00 0 0 0 3.80 -18.84A1.50 1.50 0 0 1 5.63 -19.82A20.60 20.60 0 0 1 10.03 -17.99A1.50 1.50 0 0 1 10.64 -16.01A4.00 4.00 0 0 0 16.01 -10.64A1.50 1.50 0 0 1 17.99 -10.03A20.60 20.60 0 0 1 19.82 -5.63Z" fill="#999" stroke="#3a3a3a" stroke-width="1.1" stroke-linejoin="round"/><g clip-path="url(#gc)"><path d="M-30 18.2L18.2 -30L22.700 -25.500L-25.500 22.700Z" fill="#ebebeb"/><path d="M-25.500 22.700L22.700 -25.500L25.500 -22.700L-22.700 25.500Z" fill="#c6c6c6"/></g><circle r="5.300" fill="#f2f2f2" stroke="#333" stroke-width="1.2"/></g>
<path d="M74.800 695.800L87.500 701.500V716L74.800 721.900L62.200 716V701.500Z" fill="#505050"/><path d="M74.800 698.700L82.700 702.400L74.800 706.600L66.800 702.400Z" fill="#fff"/><path d="M77.200 709.600L84.700 705.800V714.700L77.200 718.300Z" fill="#fff"/><path d="M84.800 696.300L92 696.600L91.600 703.300Z" fill="#484848"/>
<g transform="translate(53.4,774.4)"><path d="M19.82 -5.63A1.50 1.50 0 0 1 18.84 -3.80A4.00 4.00 0 0 0 18.84 3.80A1.50 1.50 0 0 1 19.82 5.63A20.60 20.60 0 0 1 17.99 10.03A1.50 1.50 0 0 1 16.01 10.64A4.00 4.00 0 0 0 10.64 16.01A1.50 1.50 0 0 1 10.03 17.99A20.60 20.60 0 0 1 5.63 19.82A1.50 1.50 0 0 1 3.80 18.84A4.00 4.00 0 0 0 -3.80 18.84A1.50 1.50 0 0 1 -5.63 19.82A20.60 20.60 0 0 1 -10.03 17.99A1.50 1.50 0 0 1 -10.64 16.01A4.00 4.00 0 0 0 -16.01 10.64A1.50 1.50 0 0 1 -17.99 10.03A20.60 20.60 0 0 1 -19.82 5.63A1.50 1.50 0 0 1 -18.84 3.80A4.00 4.00 0 0 0 -18.84 -3.80A1.50 1.50 0 0 1 -19.82 -5.63A20.60 20.60 0 0 1 -17.99 -10.03A1.50 1.50 0 0 1 -16.01 -10.64A4.00 4.00 0 0 0 -10.64 -16.01A1.50 1.50 0 0 1 -10.03 -17.99A20.60 20.60 0 0 1 -5.63 -19.82A1.50 1.50 0 0 1 -3.80 -18.84A4.00 4.00 0 0 0 3.80 -18.84A1.50 1.50 0 0 1 5.63 -19.82A20.60 20.60 0 0 1 10.03 -17.99A1.50 1.50 0 0 1 10.64 -16.01A4.00 4.00 0 0 0 16.01 -10.64A1.50 1.50 0 0 1 17.99 -10.03A20.60 20.60 0 0 1 19.82 -5.63Z" fill="#999" stroke="#3a3a3a" stroke-width="1.1" stroke-linejoin="round"/><g clip-path="url(#gc)"><path d="M-30 18.2L18.2 -30L22.700 -25.500L-25.500 22.700Z" fill="#ebebeb"/><path d="M-25.500 22.700L22.700 -25.500L25.500 -22.700L-22.700 25.500Z" fill="#c6c6c6"/></g><circle r="5.300" fill="#f2f2f2" stroke="#333" stroke-width="1.2"/></g>
<path d="M56.600 784Q73 764.500 90.400 784Q73 803.500 56.600 784Z" fill="#fbfbfb" stroke="#6a6a6a" stroke-width="1"/><circle cx="73" cy="784.700" r="6.600" fill="#b4b4b4"/><circle cx="73" cy="784.700" r="5" fill="#444"/><circle cx="71.300" cy="783.300" r="1.400" fill="#fff"/>
</svg>
<div class="t" style="left:126px;top:160px">源模式:</div>
<div class="inp" style="left:165px;top:154px;width:187px;height:26px;padding-left:14px;line-height:24px;letter-spacing:-0.62px">SYSDBA</div>
<svg class="a" style="left:332px;top:164px" width="11" height="6" viewBox="0 0 11 6"><path d="M0 0H11L5.5 6Z" fill="#7f7f7f"/></svg>
<div class="t" style="left:371px;top:160px">对象类型:</div>
<div class="inp" style="left:423px;top:154px;width:110px;height:26px;padding-left:13px;line-height:24px">表</div>
<svg class="a" style="left:514px;top:164px" width="11" height="6" viewBox="0 0 11 6"><path d="M0 0H11L5.5 6Z" fill="#7f7f7f"/></svg>
<div class="inp" style="left:554px;top:156px;width:64px;height:23px"></div>
<div class="btn" style="left:623px;top:156px;width:90px">按序号选中</div>
<div class="inp" style="left:733px;top:156px;width:64px;height:23px"></div>
<div class="btn" style="left:802px;top:156px;width:90px">搜索并选中</div>
<div class="inp" style="left:912px;top:156px;width:65px;height:23px;padding-left:7px;line-height:21px"><div style="overflow:hidden;width:51px;letter-spacing:-.3px">{TABLE_N</div></div>
<div class="btn" style="left:981px;top:156px;width:126px">批量修改目标表名</div>
<div class="inp" style="left:1112px;top:156px;width:64px;height:23px;padding-left:7px;line-height:21px"><div style="overflow:hidden;width:51px;letter-spacing:-.5px">TS_{SCHE</div></div>
<div class="btn" style="left:1181px;top:156px;width:114px">批量修改表空间</div>
<div class="a" style="left:121px;top:186px;width:1291px;height:549px;border:1px solid #a3a3a3;background:#fff"></div>
<div class="a" style="left:123px;top:188px;width:1288px;height:26px;background:#f2f2f2"></div>
<div class="a" style="left:124px;top:214px;width:1px;height:440px;background:#c4c4c4"></div>
<div class="hd" style="left:123px;width:75px">行号</div>
<div class="hd" style="left:198px;width:75px;background:#fff"></div>
<div class="hd" style="left:273px;width:103px">源表名</div>
<div class="hd" style="left:376px;width:104px">目标表名</div>
<div class="hd" style="left:480px;width:103px">迁移方式</div>
<div class="hd" style="left:583px;width:104px">表空间</div>
<div class="hd" style="left:687px;width:103px">初始大小...</div>
<div class="hd" style="left:790px;width:104px">增长量(K)</div>
<div class="hd" style="left:894px;width:103px">最大值(K)</div>
<div class="hd" style="left:997px;width:104px">空闲比</div>
<div class="hd" style="left:1101px;width:103px">最小使用...</div>
<div class="hd" style="left:1204px;width:104px">日志</div>
<div class="hd" style="left:1308px;width:103px">过滤</div>
<div class="cb" style="left:229.200px;top:194.100px"></div>
<div class="a" style="left:197px;top:214px;width:1px;height:440px;background:#e3e3e3"></div>
<div class="a" style="left:272px;top:214px;width:1px;height:440px;background:#e3e3e3"></div>
<div class="row w" style="top:214px"><i class="g" style="left:251px"></i><i class="g" style="left:355px"></i><i class="g" style="left:458px"></i><i class="g" style="left:562px"></i><i class="g" style="left:665px"></i><i class="g" style="left:769px"></i><i class="g" style="left:872px"></i><i class="g" style="left:976px"></i><i class="g" style="left:1079px"></i><i class="g" style="left:1183px"></i><div class="c" style="left:-1px;width:75px;text-align:center">1</div><div class="cb" style="left:105.200px;top:3.200px"></div><div class="c" style="left:149px;width:103px;padding-left:2.400px;letter-spacing:-0.46px">CLUSTER_INPU...</div><div class="c" style="left:252px;width:104px;padding-left:2.400px;letter-spacing:-0.46px">CLUSTER_INPU...</div><div class="c" style="left:356px;width:103px;padding-left:2.400px">新建表</div><div class="c" style="left:459px;width:104px;padding-left:2.400px;letter-spacing:-0.89px">USERS</div><div class="c r" style="left:563px;width:103px;padding-right:4px">64</div><div class="c r" style="left:666px;width:104px;padding-right:4px">64</div><div class="c r" style="left:770px;width:103px;padding-right:4px">0</div><div class="c r" style="left:873px;width:104px;padding-right:4px">10</div><div class="c r" style="left:977px;width:103px;padding-right:4px">40</div><div class="c" style="left:1080px;width:104px;padding-left:2.400px">是</div></div>
<div class="row b" style="top:234px"><div class="c" style="left:-1px;width:75px;text-align:center">2</div><div class="cb" style="left:105.200px;top:3.200px"></div><div class="c" style="left:149px;width:103px;padding-left:2.400px;letter-spacing:-0.6px">EMPLOYEES</div><div class="c" style="left:252px;width:104px;padding-left:2.400px;letter-spacing:-0.6px">EMPLOYEES</div><div class="c" style="left:356px;width:103px;padding-left:2.400px">新建表</div><div class="c" style="left:459px;width:104px;padding-left:2.400px;letter-spacing:-0.89px">USERS</div><div class="c r" style="left:563px;width:103px;padding-right:4px">64</div><div class="c r" style="left:666px;width:104px;padding-right:4px">1024</div><div class="c r" style="left:770px;width:103px;padding-right:4px">0</div><div class="c r" style="left:873px;width:104px;padding-right:4px">10</div><div class="c r" style="left:977px;width:103px;padding-right:4px">40</div><div class="c" style="left:1080px;width:104px;padding-left:2.400px">是</div></div>
<div class="row w" style="top:254px"><i class="g" style="left:251px"></i><i class="g" style="left:355px"></i><i class="g" style="left:458px"></i><i class="g" style="left:562px"></i><i class="g" style="left:665px"></i><i class="g" style="left:769px"></i><i class="g" style="left:872px"></i><i class="g" style="left:976px"></i><i class="g" style="left:1079px"></i><i class="g" style="left:1183px"></i><div class="c" style="left:-1px;width:75px;text-align:center">3</div><div class="cb" style="left:105.200px;top:3.200px"></div><div class="c" style="left:149px;width:103px;padding-left:2.400px;letter-spacing:-0.54px">FILES_OPEN_T...</div><div class="c" style="left:252px;width:104px;padding-left:2.400px;letter-spacing:-0.54px">FILES_OPEN_T...</div><div class="c" style="left:356px;width:103px;padding-left:2.400px">新建表</div><div class="c" style="left:459px;width:104px;padding-left:2.400px;letter-spacing:-0.89px">USERS</div><div class="c r" style="left:563px;width:103px;padding-right:4px">64</div><div class="c r" style="left:666px;width:104px;padding-right:4px">1024</div><div class="c r" style="left:770px;width:103px;padding-right:4px">0</div><div class="c r" style="left:873px;width:104px;padding-right:4px">10</div><div class="c r" style="left:977px;width:103px;padding-right:4px">40</div><div class="c" style="left:1080px;width:104px;padding-left:2.400px">是</div></div>
<div class="row b" style="top:274px"><div class="c" style="left:-1px;width:75px;text-align:center">4</div><div class="cb" style="left:105.200px;top:3.200px"></div><div class="c" style="left:149px;width:103px;padding-left:2.400px;letter-spacing:-0.23px">GETCHUNKSIZ...</div><div class="c" style="left:252px;width:104px;padding-left:2.400px;letter-spacing:-0.23px">GETCHUNKSIZ...</div><div class="c" style="left:356px;width:103px;padding-left:2.400px">新建表</div><div class="c" style="left:459px;width:104px;padding-left:2.400px;letter-spacing:-0.89px">USERS</div><div class="c r" style="left:563px;width:103px;padding-right:4px">64</div><div class="c r" style="left:666px;width:104px;padding-right:4px">128</div><div class="c r" style="left:770px;width:103px;padding-right:4px">0</div><div class="c r" style="left:873px;width:104px;padding-right:4px">10</div><div class="c r" style="left:977px;width:103px;padding-right:4px">40</div><div class="c" style="left:1080px;width:104px;padding-left:2.400px">是</div></div>
<div class="row w" style="top:294px"><i class="g" style="left:251px"></i><i class="g" style="left:355px"></i><i class="g" style="left:458px"></i><i class="g" style="left:562px"></i><i class="g" style="left:665px"></i><i class="g" style="left:769px"></i><i class="g" style="left:872px"></i><i class="g" style="left:976px"></i><i class="g" style="left:1079px"></i><i class="g" style="left:1183px"></i><div class="c" style="left:-1px;width:75px;text-align:center">5</div><div class="cb" style="left:105.200px;top:3.200px"></div><div class="c" style="left:149px;width:103px;padding-left:2.400px;letter-spacing:-0.36px">GETLENGTH_T...</div><div class="c" style="left:252px;width:104px;padding-left:2.400px;letter-spacing:-0.36px">GETLENGTH_T...</div><div class="c" style="left:356px;width:103px;padding-left:2.400px">新建表</div><div class="c" style="left:459px;width:104px;padding-left:2.400px;letter-spacing:-0.89px">USERS</div><div class="c r" style="left:563px;width:103px;padding-right:4px">64</div><div class="c r" style="left:666px;width:104px;padding-right:4px">128</div><div class="c r" style="left:770px;width:103px;padding-right:4px">0</div><div class="c r" style="left:873px;width:104px;padding-right:4px">10</div><div class="c r" style="left:977px;width:103px;padding-right:4px">40</div><div class="c" style="left:1080px;width:104px;padding-left:2.400px">是</div></div>
<div class="row b" style="top:314px"><div class="c" style="left:-1px;width:75px;text-align:center">6</div><div class="cb" style="left:105.200px;top:3.200px"></div><div class="c" style="left:149px;width:103px;padding-left:2.400px;letter-spacing:-0.43px">INSTR_BFILE_T...</div><div class="c" style="left:252px;width:104px;padding-left:2.400px;letter-spacing:-0.43px">INSTR_BFILE_T...</div><div class="c" style="left:356px;width:103px;padding-left:2.400px">新建表</div><div class="c" style="left:459px;width:104px;padding-left:2.400px;letter-spacing:-0.89px">USERS</div><div class="c r" style="left:563px;width:103px;padding-right:4px">64</div><div class="c r" style="left:666px;width:104px;padding-right:4px">1024</div><div class="c r" style="left:770px;width:103px;padding-right:4px">0</div><div class="c r" style="left:873px;width:104px;padding-right:4px">10</div><div class="c r" style="left:977px;width:103px;padding-right:4px">40</div><div class="c" style="left:1080px;width:104px;padding-left:2.400px">是</div></div>
<div class="row w" style="top:334px"><i class="g" style="left:251px"></i><i class="g" style="left:355px"></i><i class="g" style="left:458px"></i><i class="g" style="left:562px"></i><i class="g" style="left:665px"></i><i class="g" style="left:769px"></i><i class="g" style="left:872px"></i><i class="g" style="left:976px"></i><i class="g" style="left:1079px"></i><i class="g" style="left:1183px"></i><div class="c" style="left:-1px;width:75px;text-align:center">7</div><div class="cb" style="left:105.200px;top:3.200px"></div><div class="c" style="left:149px;width:103px;padding-left:2.400px;letter-spacing:-0.36px">INSTR_CLOB_T...</div><div class="c" style="left:252px;width:104px;padding-left:2.400px;letter-spacing:-0.36px">INSTR_CLOB_T...</div><div class="c" style="left:356px;width:103px;padding-left:2.400px">新建表</div><div class="c" style="left:459px;width:104px;padding-left:2.400px;letter-spacing:-0.89px">USERS</div><div class="c r" style="left:563px;width:103px;padding-right:4px">64</div><div class="c r" style="left:666px;width:104px;padding-right:4px">128</div><div class="c r" style="left:770px;width:103px;padding-right:4px">0</div><div class="c r" style="left:873px;width:104px;padding-right:4px">10</div><div class="c r" style="left:977px;width:103px;padding-right:4px">40</div><div class="c" style="left:1080px;width:104px;padding-left:2.400px">是</div></div>
<div class="row b" style="top:354px"><div class="c" style="left:-1px;width:75px;text-align:center">8</div><div class="cb" style="left:105.200px;top:3.200px"></div><div class="c" style="left:149px;width:103px;padding-left:2.400px;letter-spacing:-0.21px">NEWTABLE_1</div><div class="c" style="left:252px;width:104px;padding-left:2.400px;letter-spacing:-0.21px">NEWTABLE_1</div><div class="c" style="left:356px;width:103px;padding-left:2.400px">新建表</div><div class="c" style="left:459px;width:104px;padding-left:2.400px;letter-spacing:-0.89px">USERS</div><div class="c r" style="left:563px;width:103px;padding-right:4px">64</div><div class="c r" style="left:666px;width:104px;padding-right:4px">64</div><div class="c r" style="left:770px;width:103px;padding-right:4px">0</div><div class="c r" style="left:873px;width:104px;padding-right:4px">10</div><div class="c r" style="left:977px;width:103px;padding-right:4px">40</div><div class="c" style="left:1080px;width:104px;padding-left:2.400px">是</div></div>
<div class="row w" style="top:374px"><i class="g" style="left:251px"></i><i class="g" style="left:355px"></i><i class="g" style="left:458px"></i><i class="g" style="left:562px"></i><i class="g" style="left:665px"></i><i class="g" style="left:769px"></i><i class="g" style="left:872px"></i><i class="g" style="left:976px"></i><i class="g" style="left:1079px"></i><i class="g" style="left:1183px"></i><div class="c" style="left:-1px;width:75px;text-align:center">9</div><div class="cb" style="left:105.200px;top:3.200px"></div><div class="c" style="left:149px;width:103px;padding-left:2.400px;letter-spacing:-0.36px">OPEN_CURSO...</div><div class="c" style="left:252px;width:104px;padding-left:2.400px;letter-spacing:-0.41px">OPEN_CURSOR...</div><div class="c" style="left:356px;width:103px;padding-left:2.400px">新建表</div><div class="c" style="left:459px;width:104px;padding-left:2.400px;letter-spacing:-0.89px">USERS</div><div class="c r" style="left:563px;width:103px;padding-right:4px">64</div><div class="c r" style="left:666px;width:104px;padding-right:4px">128</div><div class="c r" style="left:770px;width:103px;padding-right:4px">0</div><div class="c r" style="left:873px;width:104px;padding-right:4px">10</div><div class="c r" style="left:977px;width:103px;padding-right:4px">40</div><div class="c" style="left:1080px;width:104px;padding-left:2.400px">是</div></div>
<div class="row b" style="top:394px"><div class="c" style="left:-1px;width:75px;text-align:center">10</div><div class="cb" style="left:105.200px;top:3.200px"></div><div class="c" style="left:149px;width:103px;padding-left:2.400px;letter-spacing:-1.12px">T1</div><div class="c" style="left:252px;width:104px;padding-left:2.400px;letter-spacing:-1.12px">T1</div><div class="c" style="left:356px;width:103px;padding-left:2.400px">新建表</div><div class="c" style="left:459px;width:104px;padding-left:2.400px;letter-spacing:-0.89px">USERS</div><div class="c r" style="left:563px;width:103px;padding-right:4px">64</div><div class="c r" style="left:666px;width:104px;padding-right:4px">128</div><div class="c r" style="left:770px;width:103px;padding-right:4px">0</div><div class="c r" style="left:873px;width:104px;padding-right:4px">10</div><div class="c r" style="left:977px;width:103px;padding-right:4px">40</div><div class="c" style="left:1080px;width:104px;padding-left:2.400px">是</div></div>
<div class="row w" style="top:414px"><i class="g" style="left:251px"></i><i class="g" style="left:355px"></i><i class="g" style="left:458px"></i><i class="g" style="left:562px"></i><i class="g" style="left:665px"></i><i class="g" style="left:769px"></i><i class="g" style="left:872px"></i><i class="g" style="left:976px"></i><i class="g" style="left:1079px"></i><i class="g" style="left:1183px"></i><div class="c" style="left:-1px;width:75px;text-align:center">11</div><div class="cb" style="left:105.200px;top:3.200px"></div><div class="c" style="left:149px;width:103px;padding-left:2.400px;letter-spacing:-0.07px">T127796_1</div><div class="c" style="left:252px;width:104px;padding-left:2.400px;letter-spacing:-0.07px">T127796_1</div><div class="c" style="left:356px;width:103px;padding-left:2.400px">新建表</div><div class="c" style="left:459px;width:104px;padding-left:2.400px;letter-spacing:-0.89px">USERS</div><div class="c r" style="left:563px;width:103px;padding-right:4px">64</div><div class="c r" style="left:666px;width:104px;padding-right:4px">128</div><div class="c r" style="left:770px;width:103px;padding-right:4px">0</div><div class="c r" style="left:873px;width:104px;padding-right:4px">10</div><div class="c r" style="left:977px;width:103px;padding-right:4px">40</div><div class="c" style="left:1080px;width:104px;padding-left:2.400px">是</div></div>
<div class="row b" style="top:434px"><div class="c" style="left:-1px;width:75px;text-align:center">12</div><div class="cb" style="left:105.200px;top:3.200px"></div><div class="c" style="left:149px;width:103px;padding-left:2.400px;letter-spacing:-0.07px">T127796_2</div><div class="c" style="left:252px;width:104px;padding-left:2.400px;letter-spacing:-0.07px">T127796_2</div><div class="c" style="left:356px;width:103px;padding-left:2.400px">新建表</div><div class="c" style="left:459px;width:104px;padding-left:2.400px;letter-spacing:-0.89px">USERS</div><div class="c r" style="left:563px;width:103px;padding-right:4px">64</div><div class="c r" style="left:666px;width:104px;padding-right:4px">1024</div><div class="c r" style="left:770px;width:103px;padding-right:4px">0</div><div class="c r" style="left:873px;width:104px;padding-right:4px">10</div><div class="c r" style="left:977px;width:103px;padding-right:4px">40</div><div class="c" style="left:1080px;width:104px;padding-left:2.400px">是</div></div>
<div class="row w" style="top:454px"><i class="g" style="left:251px"></i><i class="g" style="left:355px"></i><i class="g" style="left:458px"></i><i class="g" style="left:562px"></i><i class="g" style="left:665px"></i><i class="g" style="left:769px"></i><i class="g" style="left:872px"></i><i class="g" style="left:976px"></i><i class="g" style="left:1079px"></i><i class="g" style="left:1183px"></i><div class="c" style="left:-1px;width:75px;text-align:center">13</div><div class="cb" style="left:105.200px;top:3.200px"></div><div class="c" style="left:149px;width:103px;padding-left:2.400px;letter-spacing:-1.12px">T2</div><div class="c" style="left:252px;width:104px;padding-left:2.400px;letter-spacing:-1.12px">T2</div><div class="c" style="left:356px;width:103px;padding-left:2.400px">新建表</div><div class="c" style="left:459px;width:104px;padding-left:2.400px;letter-spacing:-0.89px">USERS</div><div class="c r" style="left:563px;width:103px;padding-right:4px">64</div><div class="c r" style="left:666px;width:104px;padding-right:4px">128</div><div class="c r" style="left:770px;width:103px;padding-right:4px">0</div><div class="c r" style="left:873px;width:104px;padding-right:4px">10</div><div class="c r" style="left:977px;width:103px;padding-right:4px">40</div><div class="c" style="left:1080px;width:104px;padding-left:2.400px">是</div></div>
<div class="row b" style="top:474px"><div class="c" style="left:-1px;width:75px;text-align:center">14</div><div class="cb" style="left:105.200px;top:3.200px"></div><div class="c" style="left:149px;width:103px;padding-left:2.400px;letter-spacing:-1.12px">T3</div><div class="c" style="left:252px;width:104px;padding-left:2.400px;letter-spacing:-1.12px">T3</div><div class="c" style="left:356px;width:103px;padding-left:2.400px">新建表</div><div class="c" style="left:459px;width:104px;padding-left:2.400px;letter-spacing:-0.89px">USERS</div><div class="c r" style="left:563px;width:103px;padding-right:4px">64</div><div class="c r" style="left:666px;width:104px;padding-right:4px">1024</div><div class="c r" style="left:770px;width:103px;padding-right:4px">0</div><div class="c r" style="left:873px;width:104px;padding-right:4px">10</div><div class="c r" style="left:977px;width:103px;padding-right:4px">40</div><div class="c" style="left:1080px;width:104px;padding-left:2.400px">是</div></div>
<div class="row w" style="top:494px"><i class="g" style="left:251px"></i><i class="g" style="left:355px"></i><i class="g" style="left:458px"></i><i class="g" style="left:562px"></i><i class="g" style="left:665px"></i><i class="g" style="left:769px"></i><i class="g" style="left:872px"></i><i class="g" style="left:976px"></i><i class="g" style="left:1079px"></i><i class="g" style="left:1183px"></i><div class="c" style="left:-1px;width:75px;text-align:center">15</div><div class="cb" style="left:105.200px;top:3.200px"></div><div class="c" style="left:149px;width:103px;padding-left:2.400px">TAB6</div><div class="c" style="left:252px;width:104px;padding-left:2.400px">TAB6</div><div class="c" style="left:356px;width:103px;padding-left:2.400px">新建表</div><div class="c" style="left:459px;width:104px;padding-left:2.400px;letter-spacing:-0.89px">USERS</div><div class="c r" style="left:563px;width:103px;padding-right:4px">64</div><div class="c r" style="left:666px;width:104px;padding-right:4px">122880</div><div class="c r" style="left:770px;width:103px;padding-right:4px">0</div><div class="c r" style="left:873px;width:104px;padding-right:4px">10</div><div class="c r" style="left:977px;width:103px;padding-right:4px">40</div><div class="c" style="left:1080px;width:104px;padding-left:2.400px">是</div></div>
<div class="row b" style="top:514px"><div class="c" style="left:-1px;width:75px;text-align:center">16</div><div class="cb" style="left:105.200px;top:3.200px"></div><div class="c" style="left:149px;width:103px;padding-left:2.400px">TAB8</div><div class="c" style="left:252px;width:104px;padding-left:2.400px">TAB8</div><div class="c" style="left:356px;width:103px;padding-left:2.400px">新建表</div><div class="c" style="left:459px;width:104px;padding-left:2.400px;letter-spacing:-0.89px">USERS</div><div class="c r" style="left:563px;width:103px;padding-right:4px">64</div><div class="c r" style="left:666px;width:104px;padding-right:4px">122880</div><div class="c r" style="left:770px;width:103px;padding-right:4px">0</div><div class="c r" style="left:873px;width:104px;padding-right:4px">10</div><div class="c r" style="left:977px;width:103px;padding-right:4px">40</div><div class="c" style="left:1080px;width:104px;padding-left:2.400px">是</div></div>
<div class="row w" style="top:534px"><i class="g" style="left:251px"></i><i class="g" style="left:355px"></i><i class="g" style="left:458px"></i><i class="g" style="left:562px"></i><i class="g" style="left:665px"></i><i class="g" style="left:769px"></i><i class="g" style="left:872px"></i><i class="g" style="left:976px"></i><i class="g" style="left:1079px"></i><i class="g" style="left:1183px"></i><div class="c" style="left:-1px;width:75px;text-align:center">17</div><div class="cb" style="left:105.200px;top:3.200px"></div><div class="c" style="left:149px;width:103px;padding-left:2.400px;letter-spacing:-0.83px">TB_TRG_1</div><div class="c" style="left:252px;width:104px;padding-left:2.400px;letter-spacing:-0.83px">TB_TRG_1</div><div class="c" style="left:356px;width:103px;padding-left:2.400px">新建表</div><div class="c" style="left:459px;width:104px;padding-left:2.400px;letter-spacing:-0.89px">USERS</div><div class="c r" style="left:563px;width:103px;padding-right:4px">64</div><div class="c r" style="left:666px;width:104px;padding-right:4px">64</div><div class="c r" style="left:770px;width:103px;padding-right:4px">0</div><div class="c r" style="left:873px;width:104px;padding-right:4px">10</div><div class="c r" style="left:977px;width:103px;padding-right:4px">40</div><div class="c" style="left:1080px;width:104px;padding-left:2.400px">是</div></div>
<div class="row b" style="top:554px"><div class="c" style="left:-1px;width:75px;text-align:center">18</div><div class="cb" style="left:105.200px;top:3.200px"></div><div class="c" style="left:149px;width:103px;padding-left:2.400px;letter-spacing:-1.16px">TEST</div><div class="c" style="left:252px;width:104px;padding-left:2.400px;letter-spacing:-1.16px">TEST</div><div class="c" style="left:356px;width:103px;padding-left:2.400px">新建表</div><div class="c" style="left:459px;width:104px;padding-left:2.400px;letter-spacing:-0.89px">USERS</div><div class="c r" style="left:563px;width:103px;padding-right:4px">64</div><div class="c r" style="left:666px;width:104px;padding-right:4px">128</div><div class="c r" style="left:770px;width:103px;padding-right:4px">0</div><div class="c r" style="left:873px;width:104px;padding-right:4px">10</div><div class="c r" style="left:977px;width:103px;padding-right:4px">40</div><div class="c" style="left:1080px;width:104px;padding-left:2.400px">是</div></div>
<div class="row w" style="top:574px"><i class="g" style="left:251px"></i><i class="g" style="left:355px"></i><i class="g" style="left:458px"></i><i class="g" style="left:562px"></i><i class="g" style="left:665px"></i><i class="g" style="left:769px"></i><i class="g" style="left:872px"></i><i class="g" style="left:976px"></i><i class="g" style="left:1079px"></i><i class="g" style="left:1183px"></i><div class="c" style="left:-1px;width:75px;text-align:center">19</div><div class="cb" style="left:105.200px;top:3.200px"></div><div class="c" style="left:149px;width:103px;padding-left:2.400px;letter-spacing:-0.45px">TEST11</div><div class="c" style="left:252px;width:104px;padding-left:2.400px;letter-spacing:-0.45px">TEST11</div><div class="c" style="left:356px;width:103px;padding-left:2.400px">新建表</div><div class="c" style="left:459px;width:104px;padding-left:2.400px;letter-spacing:-0.89px">USERS</div><div class="c r" style="left:563px;width:103px;padding-right:4px">64</div><div class="c r" style="left:666px;width:104px;padding-right:4px">64</div><div class="c r" style="left:770px;width:103px;padding-right:4px">0</div><div class="c r" style="left:873px;width:104px;padding-right:4px">10</div><div class="c r" style="left:977px;width:103px;padding-right:4px">40</div><div class="c" style="left:1080px;width:104px;padding-left:2.400px">是</div></div>
<div class="row b" style="top:594px"><div class="c" style="left:-1px;width:75px;text-align:center">20</div><div class="cb" style="left:105.200px;top:3.200px"></div><div class="c" style="left:149px;width:103px;padding-left:2.400px;letter-spacing:-0.41px">TEST_INDEX</div><div class="c" style="left:252px;width:104px;padding-left:2.400px;letter-spacing:-0.41px">TEST_INDEX</div><div class="c" style="left:356px;width:103px;padding-left:2.400px">新建表</div><div class="c" style="left:459px;width:104px;padding-left:2.400px;letter-spacing:-0.89px">USERS</div><div class="c r" style="left:563px;width:103px;padding-right:4px">64</div><div class="c r" style="left:666px;width:104px;padding-right:4px">64</div><div class="c r" style="left:770px;width:103px;padding-right:4px">0</div><div class="c r" style="left:873px;width:104px;padding-right:4px">10</div><div class="c r" style="left:977px;width:103px;padding-right:4px">40</div><div class="c" style="left:1080px;width:104px;padding-left:2.400px">是</div></div>
<div class="row w" style="top:614px"><i class="g" style="left:251px"></i><i class="g" style="left:355px"></i><i class="g" style="left:458px"></i><i class="g" style="left:562px"></i><i class="g" style="left:665px"></i><i class="g" style="left:769px"></i><i class="g" style="left:872px"></i><i class="g" style="left:976px"></i><i class="g" style="left:1079px"></i><i class="g" style="left:1183px"></i><div class="c" style="left:-1px;width:75px;text-align:center">21</div><div class="cb" style="left:105.200px;top:3.200px"></div><div class="c" style="left:149px;width:103px;padding-left:2.400px;letter-spacing:-0.72px">TEST_TABLE</div><div class="c" style="left:252px;width:104px;padding-left:2.400px;letter-spacing:-0.72px">TEST_TABLE</div><div class="c" style="left:356px;width:103px;padding-left:2.400px">新建表</div><div class="c" style="left:459px;width:104px;padding-left:2.400px;letter-spacing:-0.89px">USERS</div><div class="c r" style="left:563px;width:103px;padding-right:4px">64</div><div class="c r" style="left:666px;width:104px;padding-right:4px">64</div><div class="c r" style="left:770px;width:103px;padding-right:4px">0</div><div class="c r" style="left:873px;width:104px;padding-right:4px">10</div><div class="c r" style="left:977px;width:103px;padding-right:4px">40</div><div class="c" style="left:1080px;width:104px;padding-left:2.400px">是</div></div>
<div class="row b" style="top:634px"><div class="c" style="left:-1px;width:75px;text-align:center">22</div><div class="cb" style="left:105.200px;top:3.200px"></div><div class="c" style="left:149px;width:103px;padding-left:2.400px;letter-spacing:-0.39px">TEST_TIME2</div><div class="c" style="left:252px;width:104px;padding-left:2.400px;letter-spacing:-0.39px">TEST_TIME2</div><div class="c" style="left:356px;width:103px;padding-left:2.400px">新建表</div><div class="c" style="left:459px;width:104px;padding-left:2.400px;letter-spacing:-0.89px">USERS</div><div class="c r" style="left:563px;width:103px;padding-right:4px">102400</div><div class="c r" style="left:666px;width:104px;padding-right:4px">102400</div><div class="c r" style="left:770px;width:103px;padding-right:4px">0</div><div class="c r" style="left:873px;width:104px;padding-right:4px">10</div><div class="c r" style="left:977px;width:103px;padding-right:4px">40</div><div class="c" style="left:1080px;width:104px;padding-left:2.400px">是</div></div>
<div class="a" style="left:423px;top:181px;width:113px;height:153px;border:1px solid #000;background:#fff;box-shadow:2px 2px 3px rgba(0,0,0,.3)"></div>
<div class="a" style="left:424px;top:182px;width:97px;height:19px;background:#5d7b9d"></div>
<div class="a" style="left:521px;top:182px;width:14px;height:151px;background:#f0f0f0"></div>
<div class="a" style="left:521px;top:196px;width:14px;height:89px;background:#d2d2d2"></div>
<svg class="a" style="left:524px;top:185px" width="8" height="5" viewBox="0 0 8 5"><path d="M0 5H8L4 0Z" fill="#606060"/></svg>
<svg class="a" style="left:524px;top:325px" width="8" height="5" viewBox="0 0 8 5"><path d="M0 0H8L4 5Z" fill="#606060"/></svg>
<div class="t" style="left:430px;top:183px;color:#fff">表</div>
<div class="t" style="left:430px;top:202px">视图</div>
<div class="t" style="left:430px;top:221px">序列</div>
<div class="t" style="left:430px;top:240px">表空间</div>
<div class="t" style="left:430px;top:259px">同义词</div>
<div class="t" style="left:430px;top:278px">物化视图</div>
<div class="t" style="left:430px;top:297px">存储过程</div>
<div class="t" style="left:430px;top:316px">包</div>
<div class="cb" style="left:124px;top:746.500px;width:14px;height:14px"></div>
<div class="t" style="left:142px;top:746px">强制迁移到<span class="j" lang="ja">：</span></div>
<div class="inp" style="left:216px;top:741px;width:186px;height:26px;padding-left:14px;line-height:24px;background:#f2f2f2;color:#8c8c8c;border-color:#c8c8c8">AUDSYS</div>
<div class="a" style="left:378px;top:742px;width:23px;height:24px;background:#fff"></div>
<svg class="a" style="left:383px;top:751px" width="11" height="6" viewBox="0 0 11 6"><path d="M0 0H11L5.5 6Z" fill="#9a9a9a"/></svg>
<div class="t" style="left:121px;top:778px">迁移范围<span class="j" lang="ja">：</span></div>
<div class="btn" style="left:216px;top:775px;width:119px;height:24px;text-align:left;padding-left:6px;line-height:22px">迁移对象和数据</div>
<svg class="a" style="left:319px;top:784px" width="9" height="5" viewBox="0 0 9 5"><path d="M0 0H9L4.5 5Z" fill="#444"/></svg>
<div class="t" style="left:121px;top:811px">源模式:SYSDBA 对象类型:表 对象总数:1 选中:0</div>
<div class="btn" style="left:791px;top:743px;width:101px">SQL查询迁移</div>
<div class="btn" style="left:791px;top:778px;width:126px">查询迁移批量导入</div>
<div class="btn" style="left:1305px;top:743px;width:78px">快速选择</div>
<div class="btn" style="left:1072px;top:841px;width:74px">&lt;上一步</div>
<div class="btn" style="left:1151px;top:841px;width:74px">下一步&gt;</div>
<div class="btn" style="left:1231px;top:841px;width:72px">完成</div>
<div class="btn" style="left:1308px;top:841px;width:72px">关闭</div>
<div class="btn" style="left:1385px;top:840px;width:25px;height:25px"></div>
<div class="a" style="left:1387px;top:842px;width:21px;height:21px;border-radius:50%;border:1px solid #5a6e96;background:#dcdfe6;text-align:center;line-height:19px;font-size:17px;color:#44598a;font-weight:bold">?</div>
</body></html>
